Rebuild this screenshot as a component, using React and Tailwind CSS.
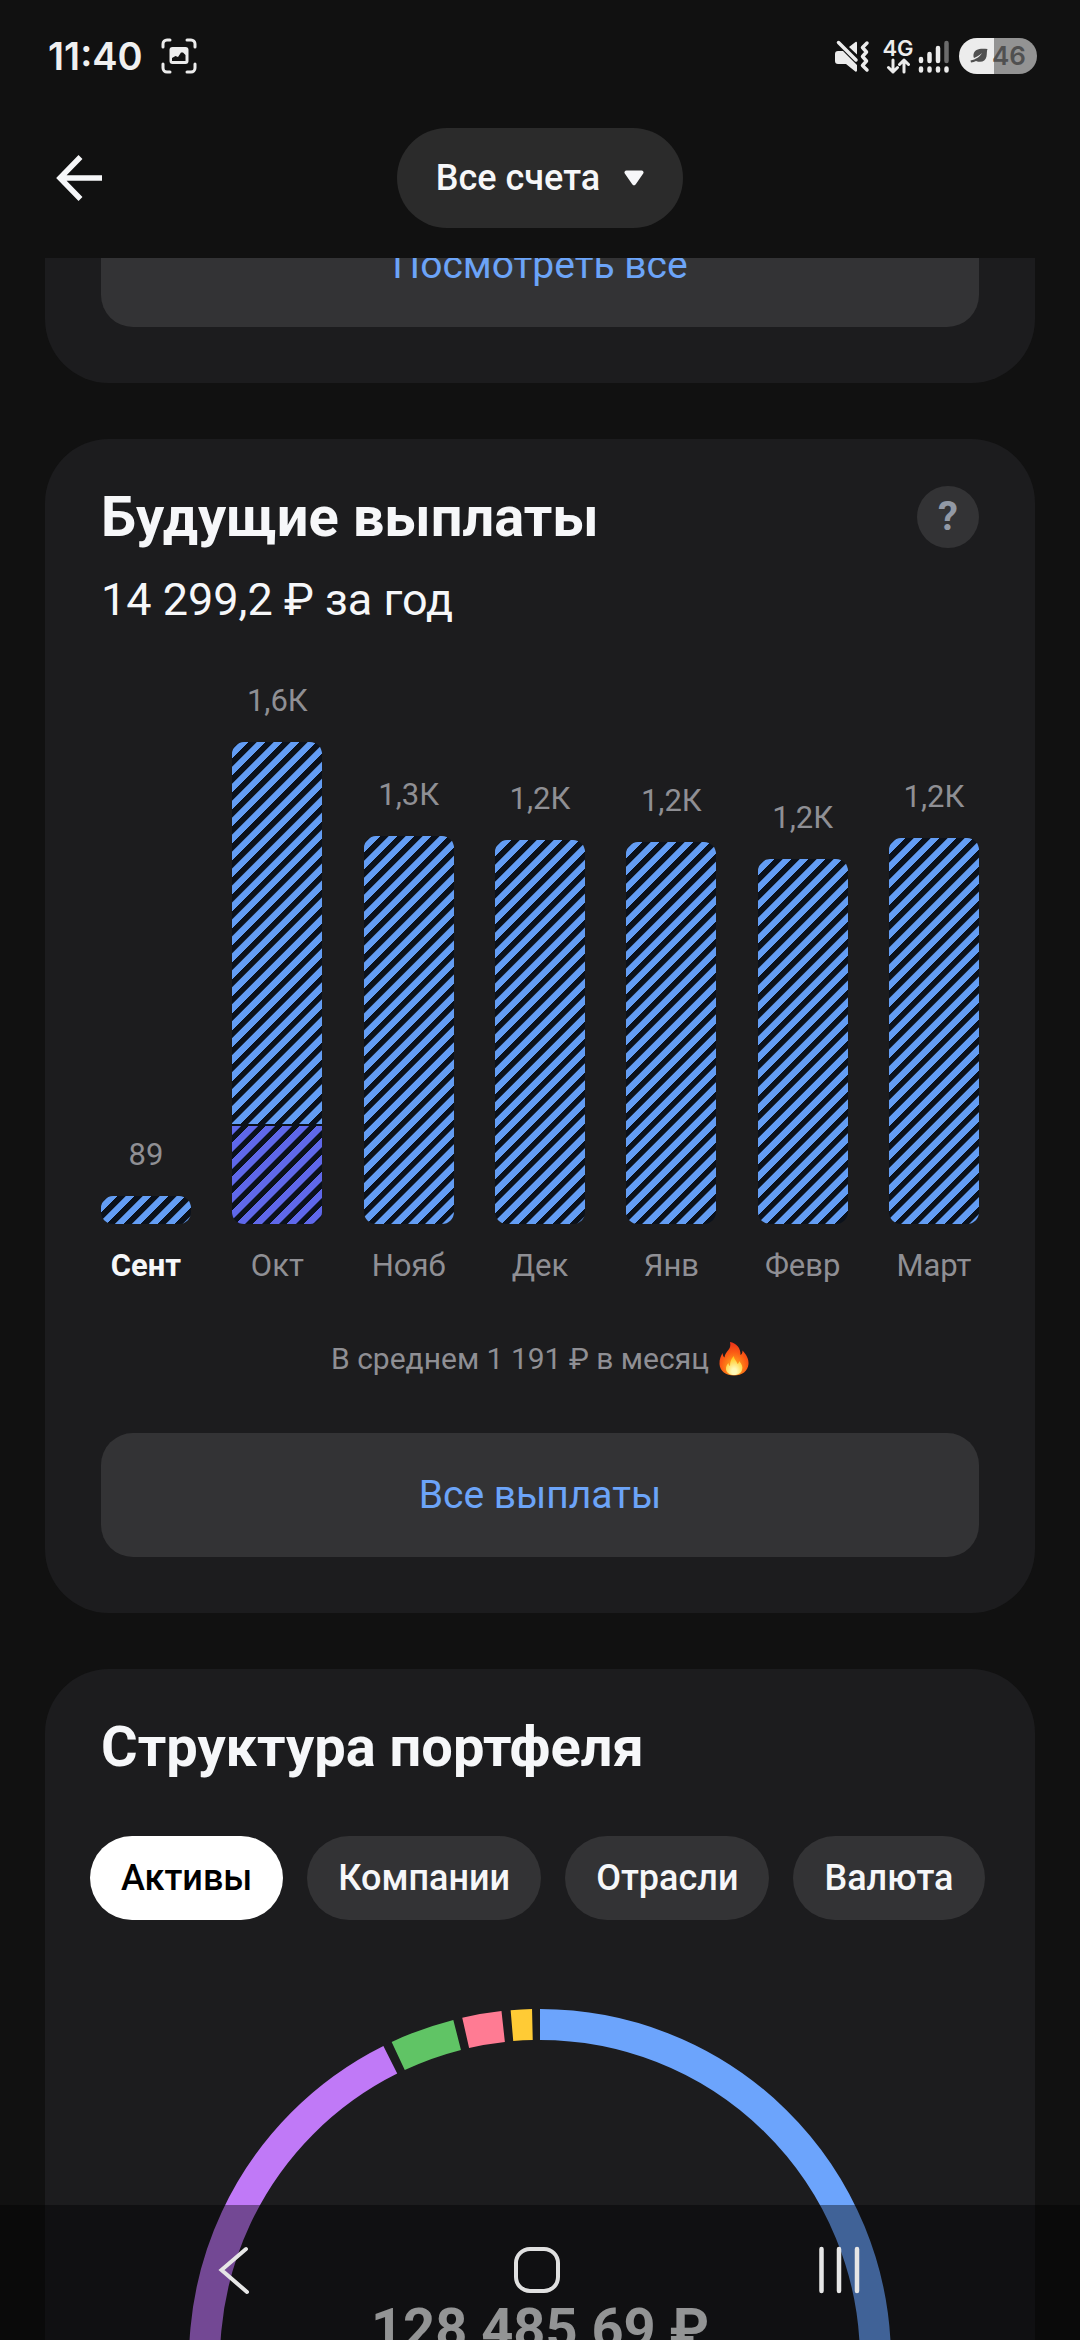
import React, { useState } from 'react';

const months = [
  { label: 'Сент', value: '89', height: 28, current: true },
  { label: 'Окт', value: '1,6К', height: 382, extra: 98 },
  { label: 'Нояб', value: '1,3К', height: 388 },
  { label: 'Дек', value: '1,2К', height: 384 },
  { label: 'Янв', value: '1,2К', height: 382 },
  { label: 'Февр', value: '1,2К', height: 365 },
  { label: 'Март', value: '1,2К', height: 386 }
];

const tabs = ['Активы', 'Компании', 'Отрасли', 'Валюта'];

// angles in degrees, clockwise from the top
const segments = [
  { from: 0, to: 178, color: '#6ca4fc' },
  { from: 179.5, to: 333.5, color: '#c079f7' },
  { from: 335, to: 345.7, color: '#60c465' },
  { from: 347.2, to: 353.7, color: '#ff7b93' },
  { from: 355.2, to: 358.7, color: '#ffcb35' }
];

const CENTER = 351;
const RADIUS = 335.5;

function arc(from, to) {
  const point = (deg) => {
    const a = (deg * Math.PI) / 180;
    return `${CENTER + RADIUS * Math.sin(a)} ${CENTER - RADIUS * Math.cos(a)}`;
  };
  return `M${point(from)}A${RADIUS} ${RADIUS} 0 ${to - from > 180 ? 1 : 0} 1 ${point(to)}`;
}

function StatusBar() {
  return (
    <div className="flex h-[98px] items-center justify-between pt-[14px] pl-12 pr-[43px]">
      <div className="flex items-center gap-[18px]">
        <span className="font-[Inter,sans-serif] text-[38px] leading-[40px] font-semibold text-[#f0f0f0]">11:40</span>
        <svg className="h-9 w-9" viewBox="0 0 36 36" fill="none" stroke="#ececec" strokeWidth="3" strokeLinecap="round">
          <path d="M2 9V6a4 4 0 0 1 4-4h3M26 2h4a4 4 0 0 1 4 4v3M34 26v4a4 4 0 0 1-4 4h-4M9 34H6a4 4 0 0 1-4-4v-4" />
          <rect x="8.500" y="9" width="19" height="17" rx="3" fill="#ececec" stroke="none" />
          <path d="M11 23v-3l3.500-2 2.500 1 3-4.500h2l2.500 2.500v6z" fill="#111111" stroke="none" />
        </svg>
      </div>

      <div className="flex items-center">
        <svg className="h-9 w-9" viewBox="0 0 36 36" fill="#ececec">
          <path d="M4 13h5L23 27v5.500c0 1-.8 1.500-1.700.9L12 26H4a3 3 0 0 1-3-3v-7a3 3 0 0 1 3-3z" />
          <path d="M15 9l6.500-5c.8-.5 1.500-.2 1.500.7V16.500z" />
          <path d="M4.500 4.500 22 22" stroke="#ececec" strokeWidth="3.500" strokeLinecap="round" />
          <path d="M33 5l-4.500 4.500 4 4.500-4 4.500 4 4.500-4 4.500L33 32" fill="none" stroke="#ececec" strokeWidth="3.500" strokeLinecap="round" strokeLinejoin="round" />
        </svg>
        <div className="ml-3 flex w-8 flex-col items-center">
          <span className="font-[Inter,sans-serif] text-[22px] leading-[20px] font-semibold text-[#ececec]">4G</span>
          <svg className="h-4 w-6" viewBox="0 0 24 16" fill="none" stroke="#ececec" strokeWidth="3" strokeLinecap="round" strokeLinejoin="round">
            <path d="M7 2v12M2.500 9.500 7 14l4.500-4.500M18 14V2M13.500 6.500 18 2l4.500 4.500" />
          </svg>
        </div>
        <svg className="ml-1 h-9 w-8" viewBox="0 0 32 36" fill="none" stroke="#ececec" strokeWidth="4.500" strokeLinecap="round">
          <path d="M3 21v2M11.500 16v7M20 10v13" />
          <path d="M28.500 5v18" stroke="#6b6b6b" />
          <path d="M3 30.500v2M11.500 30.500v2M20 30.500v2M28.500 30.500v2" />
        </svg>
        <div className="ml-[9px] flex h-9 w-[78px] items-center justify-center rounded-full bg-linear-to-r from-[#ececec] from-45% to-[#939393] to-45%">
          <svg className="h-4 w-[18px]" viewBox="0 0 18 16" fill="#505050">
            <path d="M17.500 1C10 0 4.500 1 3.500 6.500c-.2 1.500 0 2.500.5 3.500 3-1.500 5-2.500 8-5-2 3.500-6 6.500-11.500 7.500l.5 2c2-.2 3.500-.7 5-1.500 5 2 9.500.5 10.500-4.500.6-3 .1-5.500 1-7.500z" />
          </svg>
          <span className="ml-1 font-[Inter,sans-serif] text-[26px] leading-[36px] font-semibold text-[#505050]">46</span>
        </div>
      </div>
    </div>
  );
}

function PayoutBar({ month }) {
  return (
    <li className="flex w-[90px] flex-col items-center">
      <span className="text-[31px] leading-[36px] text-[#8f8f94]">{month.value}</span>
      <div className="mt-[23px] flex w-full flex-col gap-[2px] overflow-hidden rounded-xl bg-[#0b111b]">
        <div
          className="w-full bg-[repeating-linear-gradient(135deg,#0b111b_0px,#0b111b_5px,#639df4_6px,#639df4_12px)]"
          style={{ height: month.height }}
        />
        {month.extra && (
          <div
            className="w-full bg-[repeating-linear-gradient(135deg,#5f68ea_0px,#5f68ea_6px,#0b111b_7px,#0b111b_12px)]"
            style={{ height: month.extra }}
          />
        )}
      </div>
      <span
        className={`mt-6 text-[31px] leading-[36px] ${
          month.current ? 'font-bold text-[#f6f7f9]' : 'text-[#8f8f94]'
        }`}
      >
        {month.label}
      </span>
    </li>
  );
}

function Flame() {
  return (
    <svg className="h-[34px] w-[30px]" viewBox="0 0 30 34">
      <defs>
        <radialGradient id="flameOuter" cx="0.5" cy="0.75" r="0.75">
          <stop offset="0.2" stopColor="#ff9a1c" />
          <stop offset="0.6" stopColor="#fb5a14" />
          <stop offset="1" stopColor="#e9301a" />
        </radialGradient>
        <radialGradient id="flameInner" cx="0.5" cy="0.8" r="0.7">
          <stop offset="0.2" stopColor="#fff9b8" />
          <stop offset="1" stopColor="#ffc81e" />
        </radialGradient>
      </defs>
      <path
        d="M11 0c6 1 11 6 10.500 13 1.500-1 2-2.500 2-4.500C27 12 30 17 29.500 22 29 29 23 33.500 15 33.500S.8 29 .5 22C.3 17 2 14 3.500 11c.3 2 .8 3.500 2 4.500C6 9 13 8 11 0z"
        fill="url(#flameOuter)"
      />
      <path
        d="M15 14c-.5 3 3 5 3.500 8 1-.5 1.500-1.500 1.500-3 3 3 4 6 3 9-1 3.500-4 5-8 5s-7.500-2-8-5.500c-.3-3 1-5 2.500-6.500 0 1.500.5 2.500 1.500 3 0-4 1-7.500 4-10z"
        fill="url(#flameInner)"
      />
    </svg>
  );
}

export default function App() {
  const [activeTab, setActiveTab] = useState('Активы');

  return (
    <div className="relative flex h-screen flex-col overflow-hidden bg-[#111111] font-[Roboto,sans-serif] text-[#f6f7f9]">

      {/* ================= HEADER ================= */}
      <header className="relative z-10 shrink-0 bg-[#111111]">
        <StatusBar />
        <div className="grid h-40 grid-cols-[1fr_auto_1fr] items-center">
          <button aria-label="Назад" className="ml-14 w-12">
            <svg className="h-12 w-12" viewBox="0 0 48 48" fill="none" stroke="#f6f7f9" strokeWidth="5.500">
              <path d="M46 24H6M24.500 3 4 24l20.500 21" />
            </svg>
          </button>
          <button className="flex h-[100px] items-center gap-6 rounded-full bg-[#2b2b2b] px-[39px] text-[36px] leading-[44px] font-medium">
            Все счета
            <svg className="h-4 w-5" viewBox="0 0 20 16" fill="#f6f7f9">
              <path d="M2.500.5h15a2 2 0 0 1 1.700 3.100l-7.600 11a2 2 0 0 1-3.200 0l-7.600-11A2 2 0 0 1 2.500.5z" />
            </svg>
          </button>
        </div>
      </header>

      <main className="flex flex-1 flex-col gap-14 px-[45px]">
        <section className="-mt-[111px] rounded-[64px] bg-[#1c1c1e] p-14">
          <button className="h-[124px] w-full rounded-[32px] bg-[#333335] text-[39px] leading-[44px] text-[#6ca4f8]">
            Посмотреть все
          </button>
        </section>

        {/* ================= PAYOUTS ================= */}
        <section className="rounded-[64px] bg-[#1c1c1e] px-14 pt-[46px] pb-14">
          <div className="flex items-center justify-between">
            <h2 className="text-[56px] leading-[64px] font-bold">Будущие выплаты</h2>
            <button
              aria-label="Подсказка"
              className="h-[62px] w-[62px] rounded-full bg-[#333335] text-[40px] leading-[62px] font-bold text-[#9299a5]"
            >
              ?
            </button>
          </div>
          <p className="mt-[25px] text-[45px] leading-[52px]">14 299,2 ₽ за год</p>

          <ul className="mt-[57px] flex items-end justify-between">
            {months.map((month) => (
              <PayoutBar key={month.label} month={month} />
            ))}
          </ul>

          <p className="mt-[57px] flex items-center justify-center gap-[10px] text-[30px] leading-[36px] text-[#8f8f94]">
            В среднем 1 191 ₽ в месяц
            <Flame />
          </p>

          <button className="mt-14 h-[124px] w-full rounded-[32px] bg-[#333335] text-[39px] leading-[44px] text-[#6ca4f8]">
            Все выплаты
          </button>
        </section>

        {/* ================= PORTFOLIO ================= */}
        <section className="rounded-[64px] bg-[#1c1c1e] px-14 pt-[46px] pb-14">
          <h2 className="text-[56px] leading-[64px] font-bold">Структура портфеля</h2>

          <div className="-mx-[11px] mt-[57px] flex gap-6">
            {tabs.map((tab) => (
              <button
                key={tab}
                onClick={() => setActiveTab(tab)}
                className={`h-[84px] rounded-full px-[31px] text-[36px] leading-[44px] font-medium ${
                  tab === activeTab ? 'bg-white text-black' : 'bg-[#333335]'
                }`}
              >
                {tab}
              </button>
            ))}
          </div>

          <div className="relative mx-auto mt-[89px] w-[702px]">
            <svg className="h-[702px] w-full" viewBox="0 0 702 702" fill="none" strokeWidth="31">
              {segments.map((s) => (
                <path key={s.color} d={arc(s.from, s.to)} stroke={s.color} />
              ))}
            </svg>
            <p className="absolute inset-x-0 top-72 text-center text-[56px] leading-[64px] font-bold">128 485,69 ₽</p>
          </div>
        </section>
      </main>

      {/* ================= SYSTEM NAV ================= */}
      <nav className="absolute inset-x-0 bottom-0 flex h-[135px] items-center justify-between bg-black/40 pr-[211px] pb-1.5 pl-[204px]">
        <button aria-label="Назад">
          <svg className="h-[60px] w-[60px]" viewBox="0 0 60 60" fill="none" stroke="#e6e6e6" strokeWidth="4" strokeLinecap="round">
            <path d="M42 9 17.500 30 43 52" />
          </svg>
        </button>
        <button aria-label="Домой">
          <svg className="h-[60px] w-[60px]" viewBox="0 0 60 60" fill="none" stroke="#e0e0e0" strokeWidth="4">
            <rect x="9" y="9" width="42" height="42" rx="14" />
          </svg>
        </button>
        <button aria-label="Недавние">
          <svg className="h-[60px] w-[60px]" viewBox="0 0 60 60" fill="none" stroke="#e6e6e6" strokeWidth="4.500" strokeLinecap="round">
            <path d="M12.500 9v42M30 9v42M48 9v42" />
          </svg>
        </button>
      </nav>

    </div>
  );
}
